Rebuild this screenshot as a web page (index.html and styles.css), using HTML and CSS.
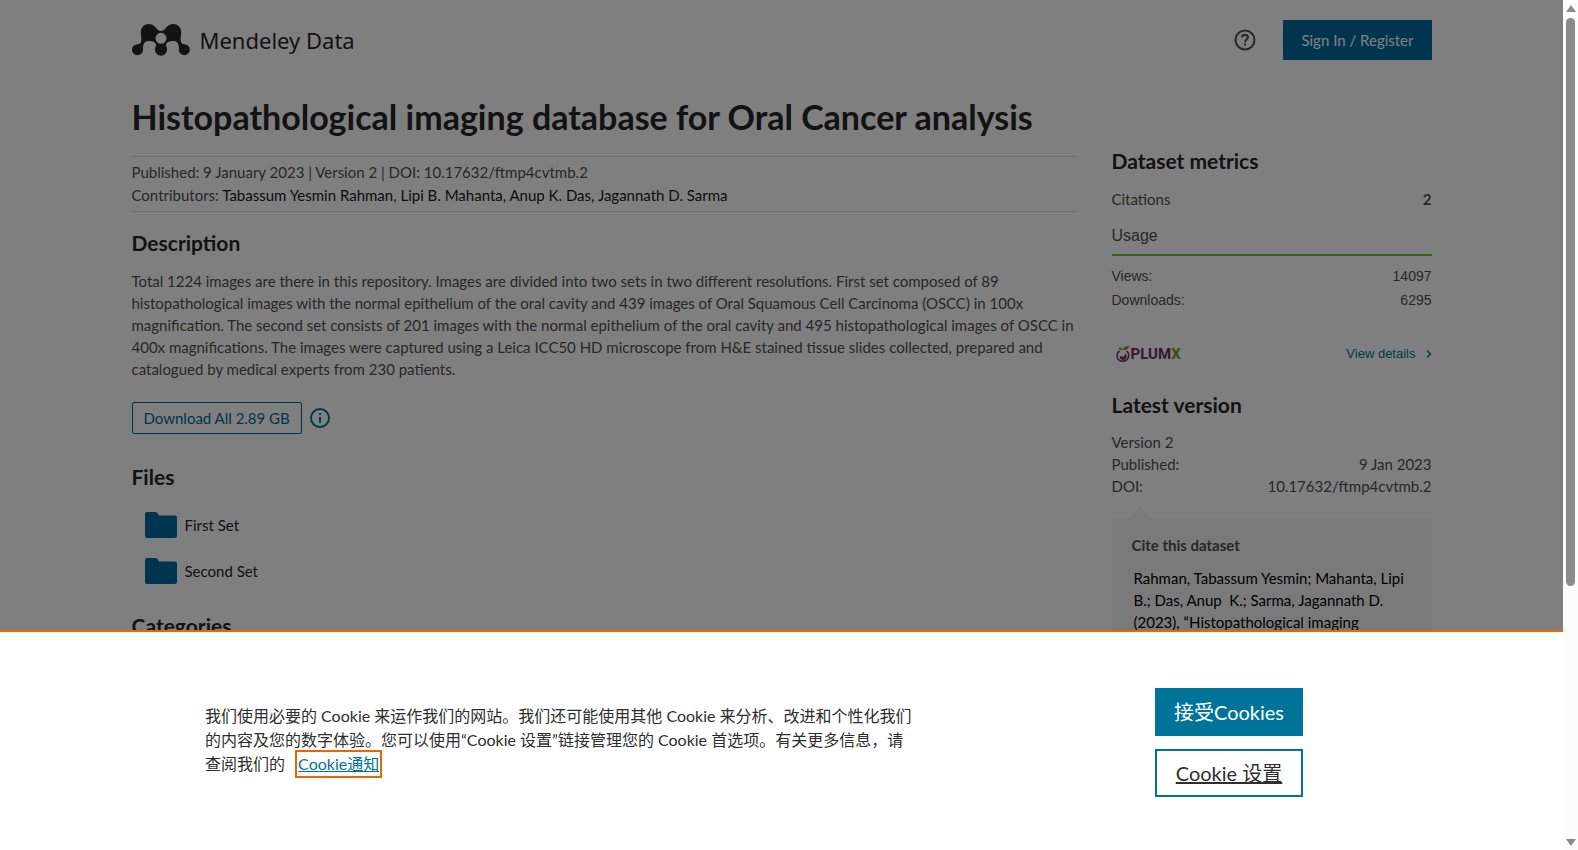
FILE: index.html
```html
<!DOCTYPE html>
<html lang="en">
<head>
  <meta charset="UTF-8">
  <meta name="viewport" content="width=device-width, initial-scale=1.0">
  <title>Histopathological imaging database for Oral Cancer analysis - Mendeley Data</title>
  <link rel="stylesheet" href="styles.css">
</head>
<body>
  <div class="page">
    <header class="header">
      <a class="logo" href="#">
        <svg class="logo-mark" width="58" height="32" viewBox="0 0 58 32" aria-hidden="true">
          <path fill="#262626" fill-rule="evenodd" d="M16.700 0C21 0 23.500 3 25 5C27 7.500 31 7.500 33 5C34.500 3 37 0 41.300 0A7.900 7.900 0 0 1 49.200 8C49.200 12 48.200 14 48.700 17C49 19 50 20 52.300 20.200A5.500 5.500 0 1 1 46.800 25.700C47.200 20 45.500 17 41.300 17C38 17 34.500 18 34 20.500C34 22 35 23.500 35 25.700A6 6 0 0 1 23 25.700C23 23.500 24 22 24 20.500C23.500 18 20 17 16.700 17C12.500 17 10.800 20 11 25.700A5.500 5.500 0 1 1 5.500 20.200C8 20 9 19 9.300 17C9.800 14 8.800 12 8.800 8A7.900 7.900 0 0 1 16.700 0ZM29 8.800A5.500 5.500 0 1 0 29 19.800A5.500 5.500 0 1 0 29 8.800Z"/>
        </svg>
        <span class="logo-text">Mendeley Data</span>
      </a>
      <div class="header-actions">
        <button class="icon-button" aria-label="Help">
          <svg width="22" height="22" viewBox="0 0 22 22" fill="none" stroke="#505050" stroke-width="2">
            <circle cx="11" cy="11" r="9.500"/>
            <path d="M8 8.500C8 4.800 14 4.800 14 8.300C14 10.600 11 10.500 11 13.200M11 14.400V16.400"/>
          </svg>
        </button>
        <button class="sign-in">Sign In / Register</button>
      </div>
    </header>

    <div class="columns">
      <main class="main">
        <h1>Histopathological imaging database for Oral Cancer analysis</h1>
        <div class="meta">
          <div>Published: 9 January 2023 | Version 2 | DOI: 10.17632/ftmp4cvtmb.2</div>
          <div>Contributors: <span class="names">Tabassum Yesmin Rahman, Lipi B. Mahanta, Anup K. Das, Jagannath D. Sarma</span></div>
        </div>

        <h2>Description</h2>
        <p class="description">Total 1224 images are there in this repository. Images are divided into two sets in two different resolutions. First set composed of 89 histopathological images with the normal epithelium of the oral cavity and 439 images of Oral Squamous Cell Carcinoma (OSCC) in 100x magnification. The second set consists of 201 images with the normal epithelium of the oral cavity and 495 histopathological images of OSCC in 400x magnifications. The images were captured using a Leica ICC50 HD microscope from H&amp;E stained tissue slides collected, prepared and catalogued by medical experts from 230 patients.</p>

        <div class="download">
          <button class="download-button">Download All 2.89 GB</button>
          <button class="icon-button" aria-label="Download info">
            <svg width="20" height="20" viewBox="0 0 20 20" fill="none" stroke="#006ba1" stroke-width="2">
              <circle cx="10" cy="10" r="9"/>
              <path d="M10 9V15M10 5V7"/>
            </svg>
          </button>
        </div>

        <h2>Files</h2>
        <ul class="files">
          <li>
            <svg width="32" height="26" viewBox="0 0 32 26" fill="#006ba1" aria-hidden="true"><path d="M2 0H11Q12.500 0 14 3.500H30Q32 3.500 32 5.500V24Q32 26 30 26H2Q0 26 0 24V2Q0 0 2 0Z"/></svg>
            <a href="#">First Set</a>
          </li>
          <li>
            <svg width="32" height="26" viewBox="0 0 32 26" fill="#006ba1" aria-hidden="true"><path d="M2 0H11Q12.500 0 14 3.500H30Q32 3.500 32 5.500V24Q32 26 30 26H2Q0 26 0 24V2Q0 0 2 0Z"/></svg>
            <a href="#">Second Set</a>
          </li>
        </ul>

        <h2>Categories</h2>
      </main>

      <aside class="sidebar">
        <h2>Dataset metrics</h2>
        <div class="row citations"><span>Citations</span><b>2</b></div>
        <div class="plum">
          <h3>Usage</h3>
          <div class="row"><span>Views:</span><span>14097</span></div>
          <div class="row"><span>Downloads:</span><span>6295</span></div>
          <div class="row plum-footer">
            <a class="plum-logo" href="#">
              <svg width="14" height="16" viewBox="0 0 14 16" aria-hidden="true">
                <path fill="none" stroke="#6f2c5f" stroke-width="1.500" d="M3.500 5C-.5 7.500 0 15 6.500 15.200C13.500 15.200 14 7.500 10.500 5"/>
                <path fill="#6f2c5f" d="M3.500 9.500C6 11.500 9 11 9 7.500C12.500 10 10 14 7 14C5 14 3.500 12 3.500 9.500Z"/>
                <path fill="#7a9b00" d="M7 4C7 1 9.500 0 13 0C12.500 3 10.500 4.500 7 4ZM6.500 4C6.500 2 5 1.500 2.500 1.500C3 3.800 4.500 4.500 6.500 4Z"/>
              </svg>
              <span>PLUM<span class="plum-x">X</span></span>
            </a>
            <a class="details" href="#">View details
              <svg width="6" height="8" viewBox="0 0 6 8" fill="none" stroke="#007398" stroke-width="1.500" aria-hidden="true"><path d="M1 .5L4.500 4L1 7.500"/></svg>
            </a>
          </div>
        </div>

        <h2>Latest version</h2>
        <div class="version">
          <div>Version 2</div>
          <div class="row"><span>Published:</span><span>9 Jan 2023</span></div>
          <div class="row"><span>DOI:</span><span>10.17632/ftmp4cvtmb.2</span></div>
        </div>

        <div class="cite">
          <h3>Cite this dataset</h3>
          <p>Rahman, Tabassum Yesmin; Mahanta, Lipi B.; Das, Anup&nbsp; K.; Sarma, Jagannath D. (2023), “Histopathological imaging database for Oral Cancer analysis”, Mendeley Data, V2, doi: 10.17632/ftmp4cvtmb.2</p>
        </div>
      </aside>
    </div>
  </div>

  <div class="overlay"></div>

  <section class="cookie-banner" lang="zh">
    <p>我们使用必要的 Cookie 来运作我们的网站。我们还可能使用其他 Cookie 来分析、改进和个性化我们的内容及您的数字体验。您可以使用“Cookie 设置”链接管理您的 Cookie 首选项。有关更多信息，请查阅我们的 <a href="#">Cookie通知</a></p>
    <div class="cookie-buttons">
      <button class="accept">接受Cookies</button>
      <button class="settings">Cookie 设置</button>
    </div>
  </section>

  <div class="scrollbar" aria-hidden="true">
    <i class="arrow up"></i>
    <i class="thumb"></i>
    <i class="arrow down"></i>
  </div>
</body>
</html>
```

FILE: styles.css
```css
* { box-sizing: border-box; margin: 0; padding: 0; }
html { height: 100%; overflow: hidden; }
body { height: 100%; overflow: hidden; padding-right: 15px; background: #fff; color: #505050; font-family: Lato, "Noto Sans CJK SC", sans-serif; font-size: 15px; line-height: 22px; }
button { font: inherit; cursor: pointer; }
a { color: inherit; text-decoration: none; }
svg { display: block; flex: none; }

.page { max-width: 1300px; margin: 0 auto; }
.header { display: flex; justify-content: space-between; align-items: center; height: 80px; }
.logo { display: flex; align-items: center; gap: 10px; color: #262626; }
.logo-text { font-family: "Noto Sans", sans-serif; font-size: 22px; line-height: 32px; }
.header-actions { display: flex; align-items: center; gap: 27px; }
.icon-button { border: none; background: none; }
.sign-in { height: 40px; padding: 0 18px; border: none; background: #006ba1; color: #fff; }

.columns { display: flex; justify-content: space-between; gap: 36px; }
.main { flex: 1; min-width: 0; }
h1 { padding: 13px 0 15px; color: #262626; font-size: 34px; line-height: 48px; }
h2 { color: #262626; font-size: 21px; line-height: 28px; }
.meta { padding: 4px 0; border-top: 1px solid #d9d9d9; border-bottom: 1px solid #d9d9d9; margin-bottom: 17px; line-height: 23px; }
.names { color: #1a1a1a; }
.description { margin: 13px 0 22px; }
.download { display: flex; align-items: center; gap: 8px; margin-bottom: 29px; }
.download-button { height: 32px; padding: 0 11px; border: 1px solid #006ba1; border-radius: 2px; background: none; color: #006ba1; }
.files { margin: 11px 0 18px 13px; list-style: none; color: #262626; }
.files li { display: flex; align-items: center; gap: 8px; height: 46px; }

.sidebar { width: 320px; padding-top: 67px; }
.row { display: flex; justify-content: space-between; }
.citations { margin: 13px 0 10px; }
.plum { margin-bottom: 25px; font-family: "Liberation Sans", Arial, sans-serif; font-size: 14px; line-height: 24px; }
.plum h3 { margin-bottom: 8px; padding: 4px 0 6px; border-bottom: 2px solid #6cc04a; font-size: 16px; font-weight: normal; }
.plum-footer { align-items: center; margin-top: 30px; padding-left: 4px; }
.plum-logo { display: flex; align-items: center; gap: 1px; color: #6f2c5f; font-family: Roboto, sans-serif; font-size: 15px; font-weight: bold; }
.plum-x { color: #7a9b00; }
.details { display: flex; align-items: center; gap: 10px; color: #007398; font-size: 13px; }
.version { margin: 12px 0 22px; }
.cite { position: relative; padding: 15px 20px; background: #f5f5f5; }
.cite::before { content: ""; position: absolute; top: -12px; left: 16px; border: solid transparent; border-width: 0 12px 12px; border-bottom-color: #f5f5f5; }
.cite h3 { margin-bottom: 11px; font-size: 15px; }
.cite p { padding: 0 2px; color: #000; }

.overlay { position: fixed; inset: 0 15px 0 0; background: rgba(0, 0, 0, 0.5); }
.cookie-banner { position: fixed; left: 0; right: 15px; bottom: 0; display: flex; justify-content: space-between; align-items: center; height: 220px; padding: 2px 260px 0 205px; border-top: 2px solid #eb6500; background: #fff; color: #2e2e2e; font-size: 16px; }
.cookie-banner p { width: 708px; padding-bottom: 4px; line-height: 24px; }
.cookie-banner a { display: inline-block; margin-left: 8px; padding: 0 1px; outline: 2px solid #eb6500; color: #007398; text-decoration: underline; }
.cookie-buttons { display: flex; flex-direction: column; gap: 13px; width: 148px; }
.cookie-buttons button { height: 48px; border: 2px solid #007398; font-size: 20px; line-height: 24px; }
.accept { background: #007398; color: #fff; }
.settings { background: #fff; color: #2e2e2e; text-decoration: underline; }

.scrollbar { position: fixed; top: 0; right: 0; bottom: 0; display: flex; flex-direction: column; align-items: center; width: 15px; padding: 5px 0 4px; background: #fcfcfc; }
.arrow { border: solid transparent; }
.up { border-width: 0 5px 7px; border-bottom-color: #8b8b8b; }
.down { margin-top: auto; border-width: 7px 5px 0; border-top-color: #8b8b8b; }
.thumb { width: 9px; height: 568px; margin-top: 6px; border-radius: 5px; background: #8b8b8b; }
```
